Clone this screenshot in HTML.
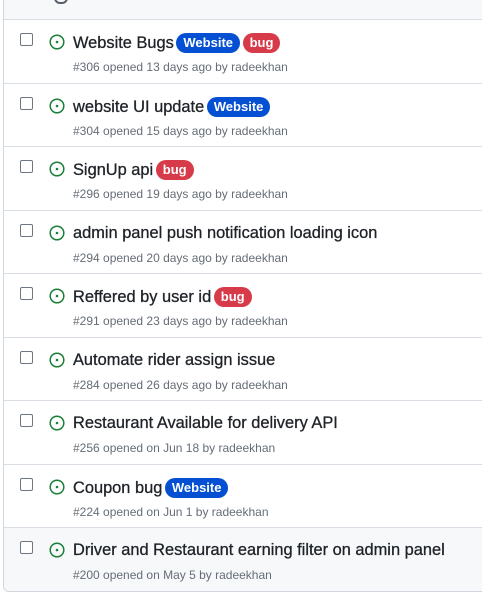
<!DOCTYPE html>
<html><head><meta charset="utf-8"><style>
body{margin:0;width:482px;height:611px;background:#fff;font-family:"Liberation Sans",Arial,sans-serif;overflow:hidden;position:relative}
.card{position:absolute;left:3px;top:-10px;width:500px;height:602px;border:1px solid #d0d7de;border-radius:6px;box-sizing:border-box;overflow:hidden}
.hdr{height:28px;background:#f6f8fa;border-bottom:1px solid #d8dee4}
.row{position:relative;height:63.5px;border-bottom:1px solid #d8dee4;box-sizing:border-box}
.row.last{background:#f6f8fa;border-bottom:none;height:64px}
.cb{position:absolute;left:16px;top:13px;width:11px;height:11px;border:1px solid #6e7781;border-radius:2px;background:#fff}
.ic{position:absolute;left:45px;top:14px}
.t{position:absolute;left:69px;top:13px;font-size:16.4px;font-weight:400;color:#1f2328;white-space:nowrap;-webkit-text-stroke:0.3px #1f2328}
.m{position:absolute;left:69px;top:40px;font-size:12px;color:#656d76;white-space:nowrap}
.l{display:inline-block;font-size:13px;font-weight:700;color:#fff;padding:0 7px;line-height:20px;border-radius:10px;vertical-align:1px;margin-left:-2px;-webkit-text-stroke:0}
.w{background:#0550d2}.b{background:#d73a49}
</style></head><body>
<div class="card">
<div class="hdr"><div style="position:absolute;left:50px;top:5px;width:10px;height:6px;border:2px solid #57606a;border-top:none;border-radius:0 0 6px 6px"></div></div>
<div class="row"><div class="cb"></div><svg class="ic" width="16" height="16" viewBox="0 0 16 16"><circle cx="8" cy="8" r="6.8" fill="none" stroke="#1a7f37" stroke-width="1.5"/><circle cx="8" cy="8" r="1.3" fill="#1a7f37"/></svg><div class="t">Website Bugs <span class="l w">Website</span> <span class="l b">bug</span></div><div class="m">#306 opened 13 days ago by radeekhan</div></div>
<div class="row"><div class="cb"></div><svg class="ic" width="16" height="16" viewBox="0 0 16 16"><circle cx="8" cy="8" r="6.8" fill="none" stroke="#1a7f37" stroke-width="1.5"/><circle cx="8" cy="8" r="1.3" fill="#1a7f37"/></svg><div class="t">website UI update <span class="l w">Website</span></div><div class="m">#304 opened 15 days ago by radeekhan</div></div>
<div class="row"><div class="cb"></div><svg class="ic" width="16" height="16" viewBox="0 0 16 16"><circle cx="8" cy="8" r="6.8" fill="none" stroke="#1a7f37" stroke-width="1.5"/><circle cx="8" cy="8" r="1.3" fill="#1a7f37"/></svg><div class="t">SignUp api <span class="l b">bug</span></div><div class="m">#296 opened 19 days ago by radeekhan</div></div>
<div class="row"><div class="cb"></div><svg class="ic" width="16" height="16" viewBox="0 0 16 16"><circle cx="8" cy="8" r="6.8" fill="none" stroke="#1a7f37" stroke-width="1.5"/><circle cx="8" cy="8" r="1.3" fill="#1a7f37"/></svg><div class="t">admin panel push notification loading icon</div><div class="m">#294 opened 20 days ago by radeekhan</div></div>
<div class="row"><div class="cb"></div><svg class="ic" width="16" height="16" viewBox="0 0 16 16"><circle cx="8" cy="8" r="6.8" fill="none" stroke="#1a7f37" stroke-width="1.5"/><circle cx="8" cy="8" r="1.3" fill="#1a7f37"/></svg><div class="t">Reffered by user id <span class="l b">bug</span></div><div class="m">#291 opened 23 days ago by radeekhan</div></div>
<div class="row"><div class="cb"></div><svg class="ic" width="16" height="16" viewBox="0 0 16 16"><circle cx="8" cy="8" r="6.8" fill="none" stroke="#1a7f37" stroke-width="1.5"/><circle cx="8" cy="8" r="1.3" fill="#1a7f37"/></svg><div class="t">Automate rider assign issue</div><div class="m">#284 opened 26 days ago by radeekhan</div></div>
<div class="row"><div class="cb"></div><svg class="ic" width="16" height="16" viewBox="0 0 16 16"><circle cx="8" cy="8" r="6.8" fill="none" stroke="#1a7f37" stroke-width="1.5"/><circle cx="8" cy="8" r="1.3" fill="#1a7f37"/></svg><div class="t">Restaurant Available for delivery API</div><div class="m">#256 opened on Jun 18 by radeekhan</div></div>
<div class="row"><div class="cb"></div><svg class="ic" width="16" height="16" viewBox="0 0 16 16"><circle cx="8" cy="8" r="6.8" fill="none" stroke="#1a7f37" stroke-width="1.5"/><circle cx="8" cy="8" r="1.3" fill="#1a7f37"/></svg><div class="t">Coupon bug <span class="l w">Website</span></div><div class="m">#224 opened on Jun 1 by radeekhan</div></div>
<div class="row last"><div class="cb"></div><svg class="ic" width="16" height="16" viewBox="0 0 16 16"><circle cx="8" cy="8" r="6.8" fill="none" stroke="#1a7f37" stroke-width="1.5"/><circle cx="8" cy="8" r="1.3" fill="#1a7f37"/></svg><div class="t">Driver and Restaurant earning filter on admin panel</div><div class="m">#200 opened on May 5 by radeekhan</div></div>
</div>
</body></html>
